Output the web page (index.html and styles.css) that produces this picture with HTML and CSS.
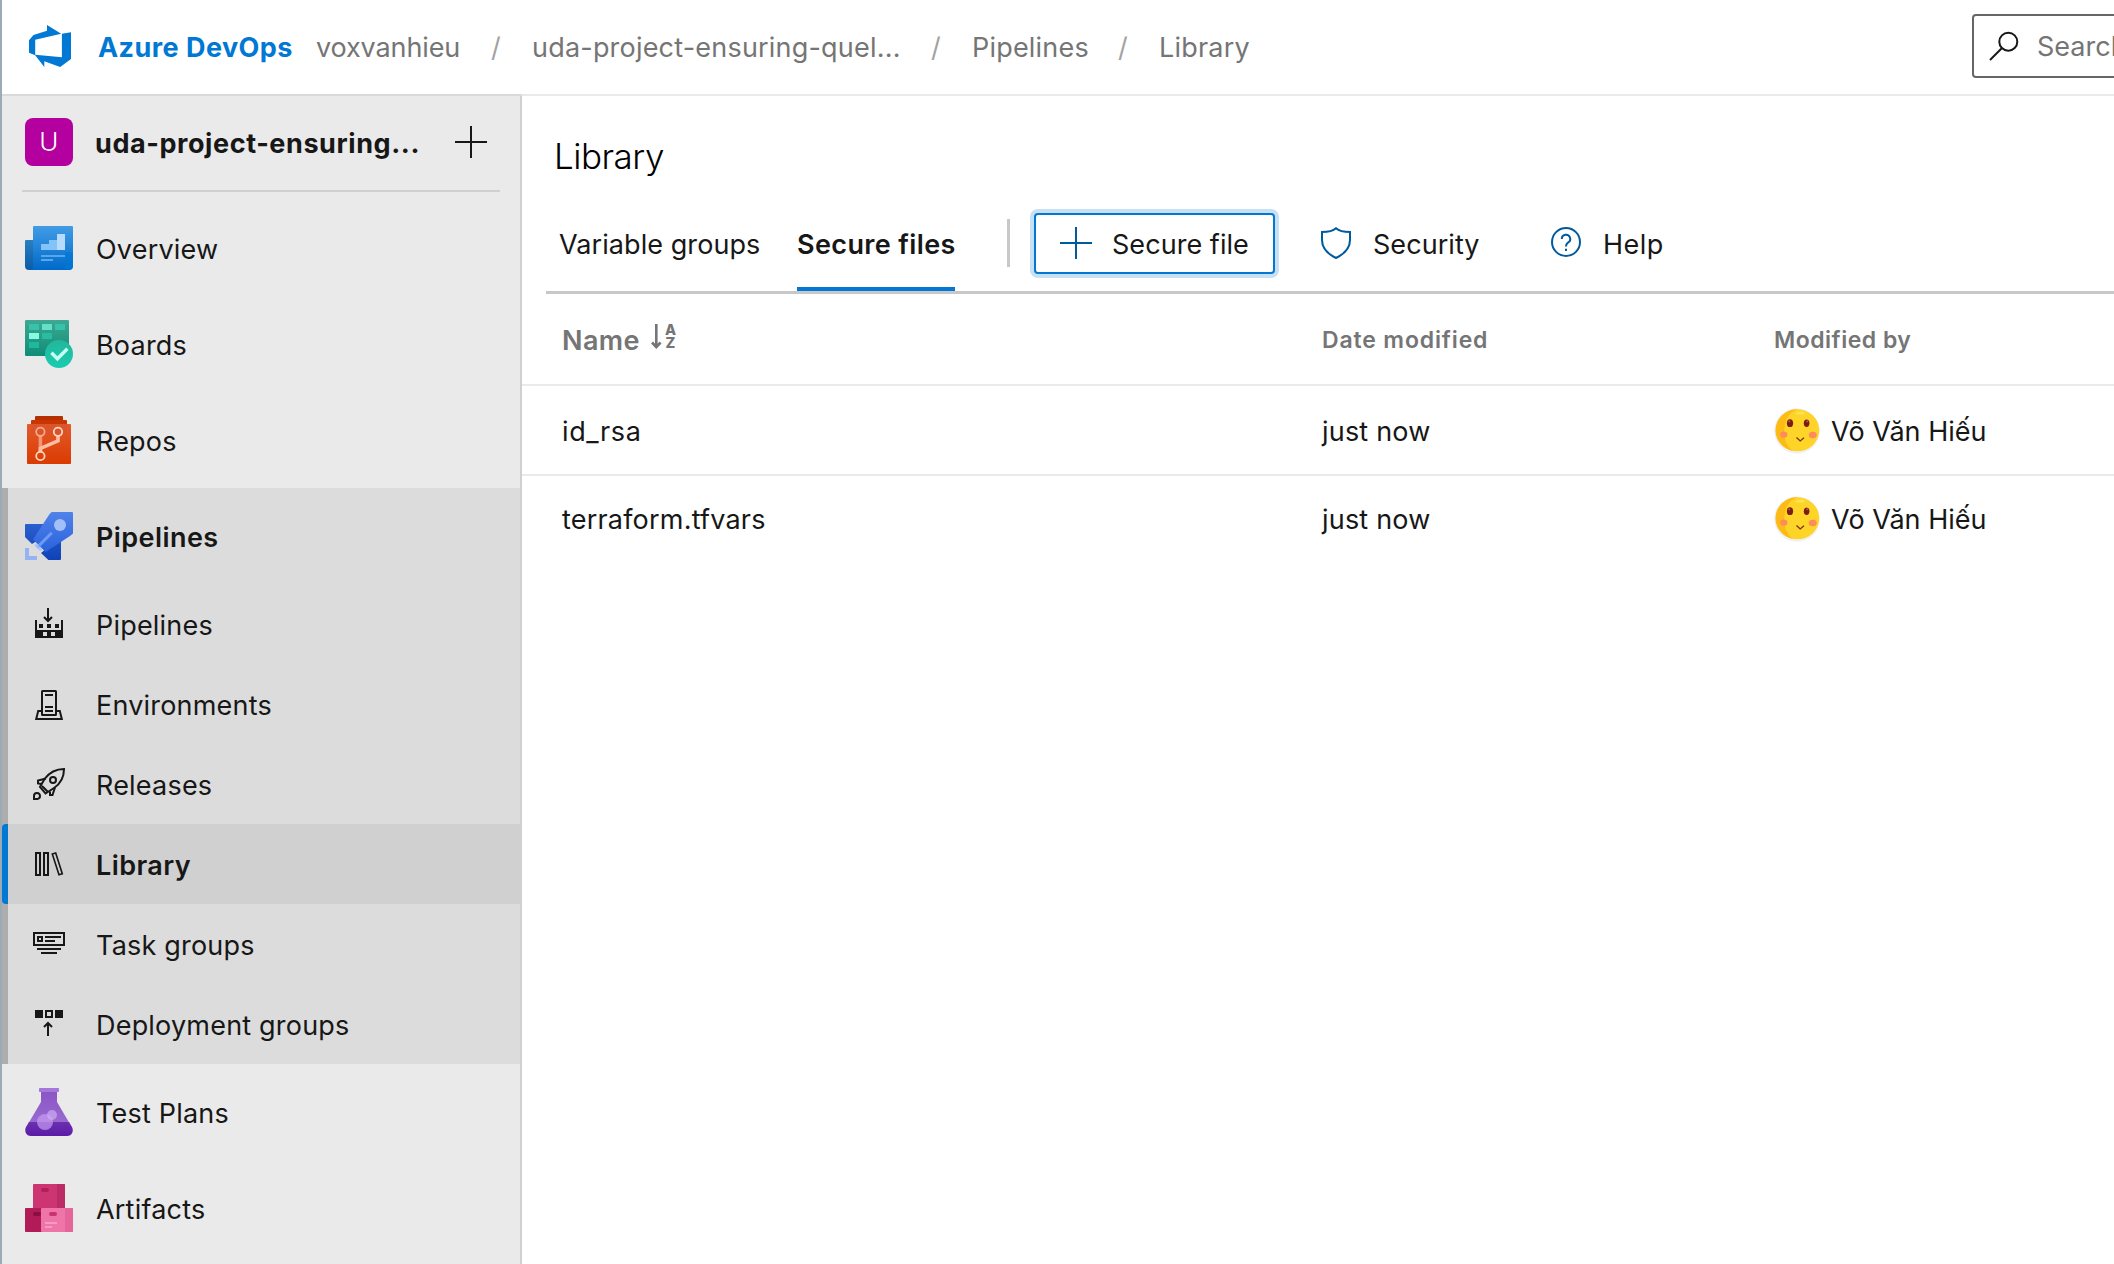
FILE: index.html
```
<!DOCTYPE html>
<html lang="en">
<head>
<meta charset="utf-8">
<title>Library - Pipelines</title>
<link rel="stylesheet" href="styles.css">
</head>
<body>
<div class="app">
  <header class="topbar">
    <svg class="logo" viewBox="0 0 42 42"><path fill="#0078d4" d="M18 0L32.200 8.700L6.200 14.700V29.700L32.900 32.300V8.700L42 7.300V34L31.200 42L15.300 36.300V42L6.200 30.300L0 27.700V15.300L4.500 10L18 5.700z"/></svg>
    <span class="brand">Azure DevOps</span>
    <nav class="crumbs">
      <span class="crumb org">voxvanhieu</span><span class="slash">/</span>
      <span class="crumb project">uda-project-ensuring-quel...</span><span class="slash">/</span>
      <span class="crumb hub">Pipelines</span><span class="slash">/</span>
      <span class="crumb">Library</span>
    </nav>
    <div class="search">
      <svg class="search-icon" viewBox="0 0 32 32" fill="none" stroke="#171717" stroke-width="2"><circle cx="20.300" cy="11.700" r="9"/><path d="M14 18L2 30"/></svg>
      <span>Search</span>
    </div>
  </header>

  <aside class="sidebar">
    <div class="project-head">
      <span class="avatar">U</span>
      <span class="project-name">uda-project-ensuring...</span>
      <svg class="plus" viewBox="0 0 32 32" stroke="#171717" stroke-width="2"><path d="M16 0V32M0 16H32"/></svg>
    </div>

    <a class="hub-item">
      <svg class="hub-icon" viewBox="0 0 24 24">
        <defs>
          <linearGradient id="ov" x2="0" y2="1"><stop offset="0" stop-color="#429ce5"/><stop offset="1" stop-color="#0069c9"/></linearGradient>
          <linearGradient id="ov2" x2="0" y2="1"><stop offset="0" stop-color="#2a7fc0"/><stop offset="1" stop-color="#0a5ba8"/></linearGradient>
        </defs>
        <path fill="url(#ov2)" d="M.5 8H5V23H2A2 2 0 0 1 0 21V8.500A.5.5 0 0 1 .5 8z"/>
        <path fill="url(#ov)" d="M4.500 1H23.500A.5.5 0 0 1 24 1.500V21A2 2 0 0 1 22 23H2A2 2 0 0 0 4 21V1.500A.5.5 0 0 1 4.500 1z"/>
        <path fill="#0078d4" d="M20 14H24V21A2 2 0 0 1 20 21z" opacity=".6"/>
        <path fill="#83c3f7" d="M8 10H12V8H16V13H8z"/><path fill="#b5dcfb" d="M16 5H20V13H16z"/>
        <path fill="#54a9ee" d="M8 15.500H20V16.500H8zM8 17.500H14V18.500H8z"/>
      </svg>
      <span>Overview</span>
    </a>
    <a class="hub-item">
      <svg class="hub-icon" viewBox="0 0 24 24">
        <defs>
          <linearGradient id="bo" x2="0" y2="1"><stop offset="0" stop-color="#3fa893"/><stop offset="1" stop-color="#0f8d77"/></linearGradient>
          <linearGradient id="bo2" x2="0" y2="1"><stop offset="0" stop-color="#22b79b"/><stop offset="1" stop-color="#1accb0"/></linearGradient>
        </defs>
        <rect width="22" height="18" rx=".6" fill="url(#bo)"/>
        <path fill="#37c2ab" d="M2 2H7V5H2zM15 2H20V5H15z"/><path fill="#64dfc8" d="M8.500 2H13.500V5H8.500z"/>
        <path fill="#86fbe4" d="M2 6.500H7V9.500H2z"/><path fill="#26bda3" d="M8.500 6.500H13.500V9.500H8.500z"/>
        <path fill="#1eb89d" d="M2 11H7V14H2z"/>
        <circle cx="17" cy="17" r="7" fill="url(#bo2)"/>
        <path d="M13.200 16.400L16.200 19.400L21.200 14.400" fill="none" stroke="#c5fff3" stroke-width="1.700"/>
      </svg>
      <span>Boards</span>
    </a>
    <a class="hub-item">
      <svg class="hub-icon" viewBox="0 0 24 24">
        <defs><linearGradient id="re" x2="0" y2="1"><stop offset="0" stop-color="#e35a2c"/><stop offset="1" stop-color="#da3b01"/></linearGradient></defs>
        <rect x="5" width="14" height="4" rx=".5" fill="#b52f00"/>
        <rect x="3" y="2" width="18" height="5" rx=".5" fill="#cb3600"/>
        <rect x="1" y="4" width="22" height="20" rx=".5" fill="url(#re)"/>
        <rect x="3" y="4" width="18" height="5" fill="#d4532f" opacity=".6"/>
        <g fill="none" stroke="#ffbda4">
          <path d="M7.700 10V18" stroke="#f39475" stroke-width="1.800"/>
          <path d="M16.500 10V12.400L7.700 16.200V18" stroke-width="1.800"/>
          <g stroke="#ffd3c2" stroke-width=".9"><circle cx="7.700" cy="7.900" r="2.100" stroke="#f9a88c"/><circle cx="16.500" cy="7.900" r="2.100"/><circle cx="7.700" cy="20" r="2.100"/></g>
        </g>
      </svg>
      <span>Repos</span>
    </a>

    <div class="hub-group">
      <a class="hub-item current">
        <svg class="hub-icon" viewBox="0 0 24 24">
          <defs>
            <linearGradient id="pi" x2="0" y2="1"><stop offset="0" stop-color="#4f83e9"/><stop offset="1" stop-color="#2a62de"/></linearGradient>
            <linearGradient id="pi2" x2="0" y2="1"><stop offset="0" stop-color="#2b5fcd"/><stop offset="1" stop-color="#0f42b8"/></linearGradient>
          </defs>
          <path fill="url(#pi2)" d="M.5 6H10V12L3.500 16L0 12.500V6.500A.5.500 0 0 1 .5 6zM18 14V23.500A.5.500 0 0 1 17.500 24H11.700L8 20.500L11 18z"/>
          <path fill="url(#pi)" d="M13.300 0H23.500A.5.500 0 0 1 24 .5V10.700L22.500 12L10.300 20L4 13.700L12.300 1z"/>
          <path stroke="#6f9af4" stroke-width="1.500" d="M13.400 10.400L6 17.800"/>
          <path fill="#a3c0fb" d="M5.600 15.600L8.600 18.600L7.600 19.600L4.600 16.600z" opacity=".8"/>
          <circle cx="17.500" cy="6.500" r="3" fill="#a2bff8"/>
          <path fill="#96b3f1" d="M0 18H2V22H6V24H0z"/>
        </svg>
        <span>Pipelines</span>
      </a>
      <a class="sub-item">
        <svg class="sub-icon" viewBox="0 0 32 32" fill="none" stroke="#171717" stroke-width="2"><path d="M15 0V13M11 9L15 13L19 9M3 12V29H29V12"/><path fill="#171717" stroke="none" d="M6 16H10V20H6zM14 16H18V20H14zM22 16H26V20H22zM2 22H30V30H2z"/><path fill="#dcdcdc" stroke="none" d="M10 24H14V28H10zM18 24H22V28H18z"/></svg>
        <span>Pipelines</span>
      </a>
      <a class="sub-item">
        <svg class="sub-icon" viewBox="0 0 32 32" fill="none" stroke="#171717" stroke-width="2"><rect x="9" y="3" width="14" height="24" rx=".5"/><path d="M12 7H20M12 19H20M12 23H20M8 23H5.200L3.200 31H28.800L26.800 23H24"/></svg>
        <span>Environments</span>
      </a>
      <a class="sub-item">
        <svg class="sub-icon" viewBox="0 0 32 32" fill="none" stroke="#171717" stroke-width="2"><path d="M31 1C22 1 16 5 11.500 11L7 19L12.500 25.500L21 20C27 16 31 10 31 1z"/><circle cx="20" cy="12" r="3"/><path d="M13 10.500L5 12.500V15.500L8.500 16M9 18L15 24M17 23.500V27H19.500L22 19.500"/><path d="M1 31V28A3 3 0 1 1 4.500 31z"/></svg>
        <span>Releases</span>
      </a>
      <a class="sub-item selected">
        <svg class="sub-icon" viewBox="0 0 32 32" fill="none" stroke="#171717" stroke-width="2"><path d="M3 5H7V27H3zM11 5H15V27H11z"/><path stroke-width="1.600" d="M19.300 6L22.700 5L29.300 25.700L26 26.700z"/></svg>
        <span>Library</span>
      </a>
      <a class="sub-item">
        <svg class="sub-icon" viewBox="0 0 32 32" fill="none" stroke="#171717" stroke-width="2"><path d="M1 5H31V17H1zM5 9H9V13H5zM12 9H28M12 13H22M4 21H28M8 25H24"/></svg>
        <span>Task groups</span>
      </a>
      <a class="sub-item">
        <svg class="sub-icon" viewBox="0 0 32 32" fill="none" stroke="#171717" stroke-width="2"><path fill="#171717" stroke="none" d="M2 2H10V10H2zM22 2H30V10H22z"/><path d="M13 3H19V9H13zM15 28V15M11 19L15 15L19 19"/></svg>
        <span>Deployment groups</span>
      </a>
    </div>

    <a class="hub-item">
      <svg class="hub-icon" viewBox="0 0 24 24">
        <defs>
          <linearGradient id="te" x2="0" y2="1"><stop offset="0" stop-color="#8a55c6"/><stop offset="1" stop-color="#9a6ad0"/></linearGradient>
          <linearGradient id="te2" x2="0" y2="1"><stop offset="0" stop-color="#6b2fb0"/><stop offset="1" stop-color="#5a1ca6"/></linearGradient>
        </defs>
        <path fill="url(#te)" d="M8 1.500H16V7L22.200 17.500H1.800L8 7z"/>
        <rect x="7" width="10" height="2" rx=".4" fill="#a477d8"/>
        <path fill="url(#te2)" d="M2 17H22L23.500 19.500C24.500 21.500 23.500 24 21 24H3C.5 24-.5 21.500.5 19.500z"/>
        <circle cx="10" cy="17" r="4" fill="#c79bf2" opacity=".7"/><circle cx="13.500" cy="13.500" r="2.500" fill="#d3b1f5" opacity=".65"/>
      </svg>
      <span>Test Plans</span>
    </a>
    <a class="hub-item">
      <svg class="hub-icon" viewBox="0 0 24 24">
        <rect x="4" width="16" height="13" rx=".5" fill="#cd3572"/><path fill="#bb2c66" d="M16 0H19.500A.5.500 0 0 1 20 .5V12H16z"/>
        <rect y="12" width="9" height="12" rx=".5" fill="#b01b58"/>
        <rect x="8" y="12" width="16" height="12" rx=".5" fill="#ef74a7"/><path fill="#e5649a" d="M20 12H23.500A.5.500 0 0 1 24 12.500V23.500A.5.500 0 0 1 23.500 24H20z"/>
        <rect x="8" y="2" width="4" height="2" rx="1" fill="#af215b"/><rect x="4" y="14" width="4" height="2" rx="1" fill="#8b0e42"/><rect x="12" y="14" width="4" height="2" rx="1" fill="#ca3270"/>
        <path fill="#f99ac2" d="M10 19H16V20H10zM10 21H13.500V22H10z"/>
      </svg>
      <span>Artifacts</span>
    </a>
  </aside>

  <main class="content">
    <h1>Library</h1>
    <div class="toolbar">
      <span class="tab variable">Variable groups</span>
      <span class="tab active">Secure files</span>
      <i class="divider"></i>
      <button class="add"><svg viewBox="0 0 32 32" stroke="#005a9e" stroke-width="2"><path d="M16 0V32M0 16H32"/></svg><span>Secure file</span></button>
      <span class="action security"><svg viewBox="0 0 32 32" fill="none" stroke="#005a9e" stroke-width="2"><path d="M16 1.200C12.500 4.500 7 5 2 5V13C2 21 8 27 16 31C24 27 30 21 30 13V5C25 5 19.500 4.500 16 1.200z"/></svg>Security</span>
      <span class="action help"><svg viewBox="0 0 32 32" fill="none" stroke="#005a9e" stroke-width="2"><circle cx="16" cy="15" r="14"/><path d="M11.800 12A4.200 4.200 0 1 1 18 15.600C16.500 16.600 16 17.200 16 19.500M16 21.800V24"/></svg>Help</span>
    </div>
    <div class="table">
      <div class="row head">
        <span class="name">Name <svg class="sort" viewBox="0 0 28 28"><path d="M6.300 1V24M2 19.500L6.300 24L10.600 19.500" fill="none" stroke="#757575" stroke-width="2.600"/><text x="20.500" y="12" text-anchor="middle">A</text><text x="20.500" y="24.500" text-anchor="middle">Z</text></svg></span>
        <span class="small date">Date modified</span>
        <span class="small">Modified by</span>
      </div>
      <div class="row">
        <span class="id">id_rsa</span><span>just now</span>
        <span class="person"><svg viewBox="0 0 46 46"><use href="#face"/></svg>Võ Văn Hiếu</span>
      </div>
      <div class="row">
        <span>terraform.tfvars</span><span>just now</span>
        <span class="person"><svg viewBox="0 0 46 46"><use href="#face"/></svg>Võ Văn Hiếu</span>
      </div>
    </div>
  </main>
</div>
<svg class="symbols">
  <symbol id="face" viewBox="0 0 46 46">
    <circle cx="23" cy="23" r="22.800" fill="#f1f1f2"/>
    <ellipse cx="23.500" cy="22.300" rx="21.700" ry="21" fill="#ffd428"/>
    <path fill="#fdbb16" d="M23.500 1.300A21.700 21 0 0 0 19 42.900C12 38 9.500 30 10.500 20C11.500 10 16 4 23.500 1.300z"/>
    <ellipse cx="26" cy="5" rx="4.500" ry="1.500" fill="#ffe54a"/>
    <ellipse cx="16" cy="15.200" rx="3.100" ry="3.900" fill="#7a1d16"/><ellipse cx="32.600" cy="15.200" rx="2.800" ry="3.700" fill="#7a1d16"/>
    <circle cx="15.300" cy="13.300" r=".9" fill="#b9665c"/><circle cx="33.200" cy="13.300" r=".9" fill="#b9665c"/>
    <ellipse cx="9.800" cy="26.600" rx="3.600" ry="3.200" fill="#ff8a5c"/><ellipse cx="38.800" cy="27" rx="3.900" ry="3.200" fill="#ff8a5c"/>
    <path d="M22.500 29.500L26.200 33L30 29.800" fill="none" stroke="#7a3010" stroke-width="1.300"/>
  </symbol>
</svg>
</body>
</html>
```
FILE: styles.css
```
* { box-sizing: border-box; }
body {
  margin: 0;
  width: 2114px;
  height: 1264px;
  overflow: hidden;
  background: #fff;
  color: #171717;
  font: 400 27px/32px "Inter", "Noto Sans", sans-serif;
  letter-spacing: .2px;
  white-space: nowrap;
}
svg { display: block; flex: none; overflow: visible; }
.symbols { display: none; }
.app {
  display: grid;
  grid-template: 96px 1168px / 520px 1592px;
  width: 2114px;
  border-left: 2px solid #9aabb5;
}

/* top bar */
.topbar {
  grid-column: 1 / 3;
  display: flex;
  align-items: center;
  overflow: hidden;
  padding-left: 27px;
  border-bottom: 2px solid #eaeaea;
}
.logo { width: 42px; height: 42px; margin-top: -2px; }
.brand { flex: none; width: 218px; margin-left: 27px; padding-top: 1px; color: #0078d4; font-weight: 700; letter-spacing: .45px; }
.crumbs { display: flex; width: 1656px; flex: none; padding-top: 1px; color: #757575; }
.org { width: 175px; letter-spacing: -.12px; }
.project { width: 399px; }
.hub { width: 146px; }
.slash { width: 41px; color: #a3a3a3; }
.search {
  flex: none;
  display: flex;
  align-items: center;
  gap: 17px;
  width: 400px;
  height: 64px;
  padding-left: 14px;
  margin-top: -2px;
  border: 2px solid #666;
  border-radius: 4px;
  color: #757575;
  letter-spacing: 0;
}
.search span { padding-top: 2px; }
.search-icon { width: 32px; height: 32px; }

/* sidebar */
.sidebar { background: #eaeaea; border-right: 2px solid #d0d0d0; box-shadow: 0 -2px #dadada; }
.project-head {
  display: flex;
  align-items: center;
  height: 96px;
  margin: 0 20px 8px;
  padding-bottom: 2px;
  border-bottom: 2px solid #d0d0d0;
}
.avatar {
  width: 48px;
  height: 48px;
  flex: none;
  margin: 0 22px 0 3px;
  border-radius: 8px;
  background: #b4009e;
  color: #fff;
  font: 300 26px/48px "Inter", sans-serif;
  text-align: center;
}
.project-name { flex: none; width: 360px; padding-top: 3px; font-weight: 700; letter-spacing: .58px; }
.plus { width: 32px; height: 32px; }
.hub-item, .sub-item { display: flex; align-items: center; }
.hub-item { height: 96px; padding-left: 23px; }
.hub-item span { padding-top: 3px; margin-left: 23px; }
.hub-icon { width: 48px; height: 48px; }
.current, .selected { font-weight: 600; letter-spacing: .42px; }
.hub-group { background: #dcdcdc; border-left: 6px solid #adadad; }
.hub-group .hub-item { padding-left: 17px; }
.sub-item { height: 80px; padding-left: 25px; }
.sub-item span { padding-top: 3px; margin-left: 31px; }
.sub-icon { width: 32px; height: 32px; }
.selected {
  margin-left: -6px;
  padding-left: 25px;
  border-left: 6px solid #0078d4;
  border-radius: 4px 0 0 4px;
  background: #d0d0d0;
}

/* content */
.content { min-width: 0; }
h1 {
  height: 100px;
  margin: 0;
  padding: 43px 0 0 32px;
  color: #000;
  font: 300 35px/34px "Inter", sans-serif;
  letter-spacing: -.5px;
}
.toolbar {
  display: flex;
  align-items: center;
  height: 98px;
  margin-left: 24px;
  border-bottom: 3px solid #c8c8c8;
}
.tab { height: 95px; line-height: 97px; }
.variable { width: 238px; margin-left: 13px; letter-spacing: .07px; }
.active { width: 158px; border-bottom: 4px solid #0078d4; font-weight: 600; letter-spacing: .38px; }
.divider { width: 3px; height: 48px; margin: -1px 24px 0 52px; background: #c8c8c8; }
.add {
  display: flex;
  align-items: center;
  width: 241px;
  height: 61px;
  padding: 0 0 0 24px;
  border: 2px solid #0078d4;
  border-radius: 4px;
  background: #fff;
  box-shadow: 0 0 0 4px #c7e0f4;
  color: inherit;
  font: inherit;
  letter-spacing: .05px;
}
.add span { padding-top: 2px; margin-left: 20px; }
.add svg { margin-top: -1px; }
.toolbar svg { width: 32px; height: 32px; }
.action { display: flex; padding-top: 2px; letter-spacing: .05px; }
.action svg { margin-top: -2px; }
.security { width: 230px; gap: 21px; margin-left: 45px; }
.help { gap: 21px; letter-spacing: .5px; }
.row {
  display: grid;
  grid-template-columns: 760px 452px 380px;
  align-items: center;
  height: 90px;
  padding: 3px 0 0 40px;
  border-bottom: 2px solid #eaeaea;
}
.row:last-child { height: 86px; padding-top: 2px; border: 0; }
.head { height: 92px; color: #757575; font-weight: 600; }
.name { display: flex; letter-spacing: .4px; }
.small { margin-top: -1px; font-size: 23px; letter-spacing: .5px; }
.date { letter-spacing: .85px; }
.id { letter-spacing: .6px; }
.sort { width: 28px; height: 28px; margin: -2px 0 0 10px; }
.sort text { fill: #757575; font: 800 14.500px "Inter", sans-serif; letter-spacing: 0; }
.person { display: flex; align-items: center; gap: 11px; letter-spacing: 0; }
.person svg { width: 46px; height: 46px; margin-top: -2px; }
```
